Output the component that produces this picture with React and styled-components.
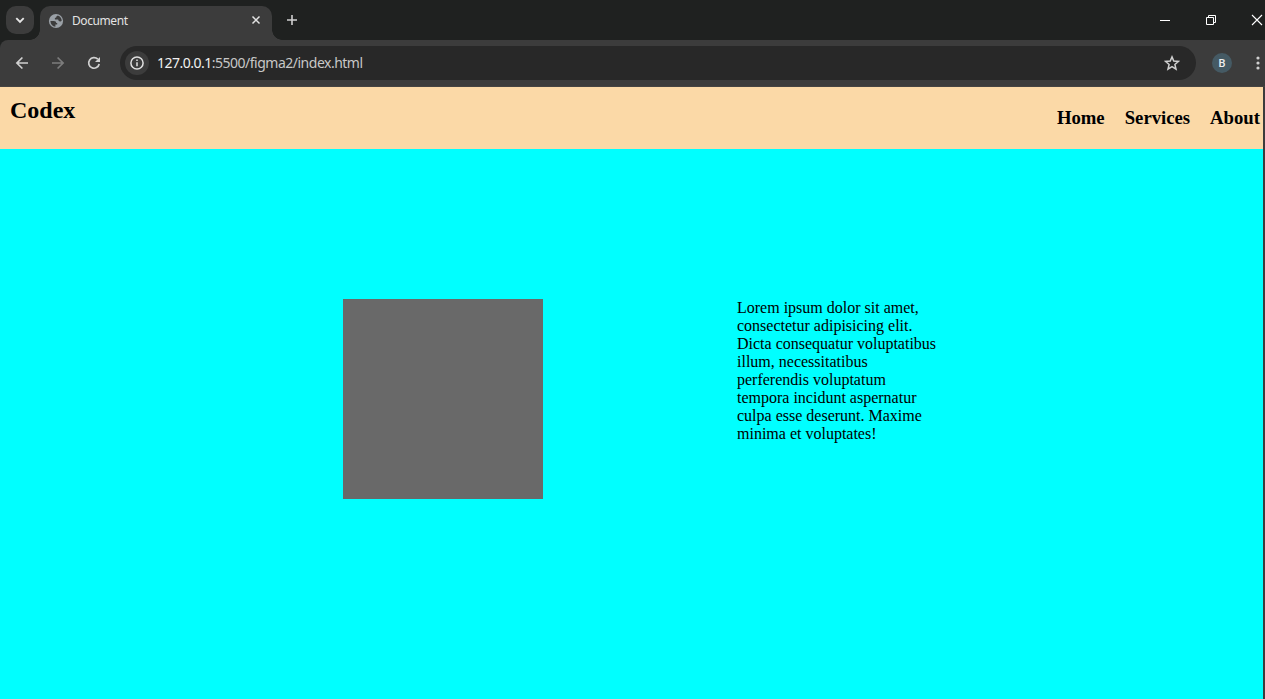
import React from "react";
import styled, { createGlobalStyle } from "styled-components";

const GlobalStyle = createGlobalStyle`
  * { box-sizing: border-box; }
  body { margin: 0; overflow: hidden; background: #3c3c3c; }
`;

const Window = styled.div`
  width: 1265px;
  height: 699px;
  overflow: hidden;
  display: flex;
  flex-direction: column;
  background: #3c3c3c;
  font-family: "Noto Sans", "Open Sans", sans-serif;
`;

const TabStrip = styled.div`
  flex: none;
  height: 40px;
  display: flex;
  align-items: flex-start;
  background: #1f2120;
`;

const TabSearch = styled.div`
  width: 28px;
  height: 28px;
  margin: 6px 6px 0;
  border-radius: 10px;
  background: #3c3c3c;
  display: flex;
`;

const Tab = styled.div`
  position: relative;
  width: 232px;
  height: 34px;
  margin-top: 6px;
  padding: 0 8px;
  display: flex;
  align-items: center;
  border-radius: 10px 10px 0 0;
  background: #3c3c3c;
  color: #e3e3e3;

  &::before,
  &::after {
    content: "";
    position: absolute;
    bottom: 0;
    width: 10px;
    height: 10px;
  }
  &::before {
    left: -10px;
    background: radial-gradient(circle at 0 0, transparent 9.5px, #3c3c3c 10px);
  }
  &::after {
    right: -10px;
    background: radial-gradient(circle at 100% 0, transparent 9.5px, #3c3c3c 10px);
  }
`;

const TabTitle = styled.span`
  flex: 1;
  margin-left: 8px;
  margin-top: -5px;
  font-size: 12px;
  line-height: 16px;
  letter-spacing: -0.42px;
`;

const Icon = styled.svg`
  display: block;
  flex: none;
  width: ${(p) => p.$size}px;
  height: ${(p) => p.$size}px;
  fill: none;
  stroke: ${(p) => p.$color || "#d0d0d0"};
  stroke-width: ${(p) => p.$weight || 1.7};
  margin: ${(p) => p.$margin || 0};
`;

const WindowControls = styled.div`
  margin-left: auto;
  display: flex;
  gap: 30px;
  padding-top: 12px;
`;

const Toolbar = styled.div`
  flex: none;
  height: 47px;
  display: flex;
  align-items: center;
  background: #3c3c3c;
  border-bottom: 1px solid #454442;
  border-top-left-radius: 8px;
`;

const ToolbarBack = styled.div`
  flex: none;
  background: #1f2120;
`;

const NavButtons = styled.div`
  display: flex;
  gap: 20px;
  width: 106px;
  margin-left: 14px;
`;

const AddressBar = styled.div`
  width: 1076px;
  height: 34px;
  padding: 0 16px 0 5px;
  border-radius: 17px;
  background: #282828;
  display: flex;
  align-items: center;
`;

const InfoBadge = styled.div`
  width: 24px;
  height: 24px;
  border-radius: 50%;
  background: #3c3c3c;
  display: flex;
  align-items: center;
  justify-content: center;
`;

const Url = styled.span`
  flex: 1;
  margin-left: 8px;
  color: #c7c7c7;
  font-size: 14px;
  line-height: 20px;
  letter-spacing: -0.5px;
`;

const Host = styled.span`
  color: #f0f0f0;
`;

const Avatar = styled.div`
  width: 20px;
  height: 20px;
  margin: 0 26px 0 16px;
  border-radius: 50%;
  background: #455a64;
  color: #eeeeee;
  font: 500 11px/21px Roboto, sans-serif;
  text-align: center;
`;

const Page = styled.div`
  flex: 1;
  width: 1263px;
  display: flex;
  flex-direction: column;
  background: #00ffff;
  color: #000;
  font-family: "Liberation Serif", "Times New Roman", serif;
`;

const Header = styled.header`
  height: 62px;
  padding: 0 3px 0 10px;
  display: flex;
  justify-content: space-between;
  background: #fbd9a7;
`;

const Brand = styled.h2`
  margin: 10px 0 0;
  font-size: 24px;
  line-height: 27px;
`;

const Menu = styled.nav`
  display: flex;
  gap: 20px;
  padding-top: 20px;
`;

const MenuItem = styled.h3`
  margin: 0;
  font-size: 18.72px;
  line-height: 22px;
`;

const Content = styled.main`
  display: flex;
  gap: 194px;
  padding: 150px 0 0 343px;
`;

const Square = styled.div`
  width: 200px;
  height: 200px;
  background: #696969;
`;

const Paragraph = styled.p`
  width: 201px;
  margin: 0;
  font-size: 16px;
  line-height: 18px;
`;

const ChevronIcon = () => (
  <Icon $size={28} viewBox="0 0 28 28" $color="#e6e6e6" $weight={1.9}>
    <path d="M10.3 12.2 14 15.9l3.7-3.7" />
  </Icon>
);

const GlobeIcon = () => (
  <Icon $size={16} viewBox="0 0 16 16" $margin="-5px 0 0">
    <circle cx="8" cy="8" r="7.1" fill="#9aa0a6" stroke="none" />
    <path
      d="M2.4 8h3.4c1.7 0 2.4.8 2.4 2h1v1.6H7.4v2.1C4.6 13.4 2.5 11.2 2.4 8ZM9.8 2.6c2.3.8 3.9 2.8 3.9 5.2-.4.4-.9.6-1.5.6-1.3 0-2-.7-2-1.8H7c-.5-1.1.1-2 1.2-2 0-1 .7-1.5 1.6-2Z"
      fill="#3c3c3c"
      stroke="none"
    />
  </Icon>
);

const CloseTabIcon = () => (
  <Icon $size={16} viewBox="0 0 16 16" $color="#e3e3e3" $weight={1.5} $margin="-6px 0 0">
    <path d="m4.5 4.5 7 7m0-7-7 7" />
  </Icon>
);

const PlusIcon = () => (
  <Icon $size={16} viewBox="0 0 16 16" $weight={1.6} $margin="12px 0 0 12px">
    <path d="M8 3v10M3 8h10" />
  </Icon>
);

const ReloadIcon = () => (
  <Icon $size={16} viewBox="0 0 16 16">
    <path d="M11.8 4.2A5.3 5.3 0 1 0 13.2 9" />
    <path d="M14 2v5H9Z" fill="#d0d0d0" stroke="none" />
  </Icon>
);

const menuItems = ["Home", "Services", "About"];

export default function App() {
  return (
    <Window>
      <GlobalStyle />
      <TabStrip>
        <TabSearch>
          <ChevronIcon />
        </TabSearch>
        <Tab>
          <GlobeIcon />
          <TabTitle>Document</TabTitle>
          <CloseTabIcon />
        </Tab>
        <PlusIcon />
        <WindowControls>
          <Icon $size={16} viewBox="0 0 16 16" $color="#fff" $weight={1}>
            <path d="M3 8.5h10" />
          </Icon>
          <Icon $size={16} viewBox="0 0 16 16" $color="#fff" $weight={1}>
            <path d="M3.5 5.5h7v7h-7zM5.5 5.5v-2h7v7h-2" />
          </Icon>
          <Icon $size={16} viewBox="0 0 16 16" $color="#fff" $weight={1.1}>
            <path d="m3 3 10 10m0-10L3 13" />
          </Icon>
        </WindowControls>
      </TabStrip>
      <ToolbarBack>
        <Toolbar>
          <NavButtons>
            <Icon $size={16} viewBox="0 0 16 16">
              <path d="M14 8H3m5.4-5.5L2.9 8l5.5 5.5" />
            </Icon>
            <Icon $size={16} viewBox="0 0 16 16" $color="#7c7c7c">
              <path d="M2 8h11M7.6 2.5 13.1 8l-5.5 5.5" />
            </Icon>
            <ReloadIcon />
          </NavButtons>
          <AddressBar>
            <InfoBadge>
              <Icon $size={16} viewBox="0 0 16 16" $weight={1.5} $color="#e0e0e0">
                <circle cx="8" cy="8" r="6.1" />
                <path d="M8 7.2v4M8 4.6v1.5" />
              </Icon>
            </InfoBadge>
            <Url>
              <Host>127.0.0.1</Host>:5500/figma2/index.html
            </Url>
            <Icon $size={16} viewBox="0 0 16 16" $weight={1.5}>
              <path d="m8 1.9 1.75 4.1 4.75.4-3.6 3.1 1.1 4.6L8 11.65 4 14.1l1.1-4.6L1.5 6.4 6.25 6Z" />
            </Icon>
          </AddressBar>
          <Avatar>B</Avatar>
          <Icon $size={16} viewBox="0 0 16 16" $margin="0 -9px 0 -8px">
            <g fill="#d0d0d0" stroke="none">
              <circle cx="8" cy="3" r="1.6" />
              <circle cx="8" cy="8" r="1.6" />
              <circle cx="8" cy="13" r="1.6" />
            </g>
          </Icon>
        </Toolbar>
      </ToolbarBack>
      <Page>
        <Header>
          <Brand>Codex</Brand>
          <Menu>
            {menuItems.map((item) => (
              <MenuItem key={item}>{item}</MenuItem>
            ))}
          </Menu>
        </Header>
        <Content>
          <Square />
          <Paragraph>
            Lorem ipsum dolor sit amet, consectetur adipisicing elit. Dicta
            consequatur voluptatibus illum, necessitatibus perferendis
            voluptatum tempora incidunt aspernatur culpa esse deserunt. Maxime
            minima et voluptates!
          </Paragraph>
        </Content>
      </Page>
    </Window>
  );
}
